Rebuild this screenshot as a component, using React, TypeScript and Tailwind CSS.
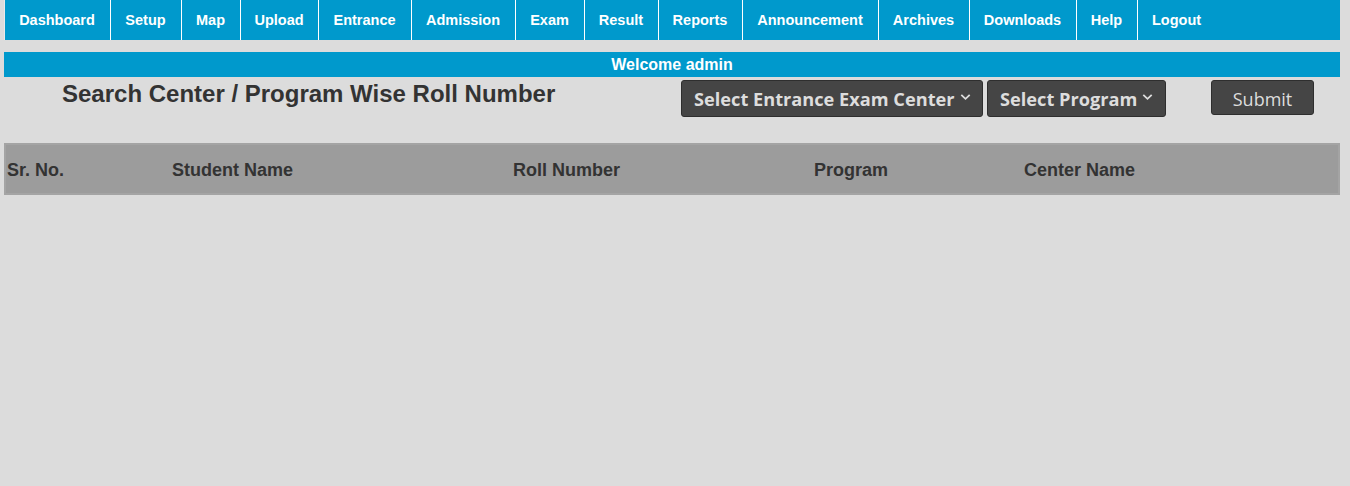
const navItems: [string, number][] = [
  ['Dashboard', 106],
  ['Setup', 71],
  ['Map', 59],
  ['Upload', 78],
  ['Entrance', 93],
  ['Admission', 104],
  ['Exam', 69],
  ['Result', 74],
  ['Reports', 84],
  ['Announcement', 136],
  ['Archives', 91],
  ['Downloads', 107],
  ['Help', 61],
  ['Logout', 0],
]

const columns = ['Sr. No.', 'Student Name', 'Roll Number', 'Program', 'Center Name']

const Chevron = () => (
  <svg width="11" height="8" viewBox="0 0 11 8" className="ml-[5px] mt-[-4px]">
    <path d="M1.3 1.8 L5.5 5.8 L9.7 1.8" fill="none" stroke="#dddddd" strokeWidth="1.8" />
  </svg>
)

const SelectBox = ({ label, className }: { label: string; className?: string }) => (
  <div
    className={
      'flex h-[37px] items-center rounded-[3px] border border-[#2e2e2e] bg-[#454545] pl-[12px] pr-[10px] text-[18.2px] font-bold text-[#dddddd] ' +
      (className ?? '')
    }
    style={{ fontFamily: '"Open Sans", sans-serif' }}
  >
    <span className="pt-[2px]">{label}</span>
    <Chevron />
  </div>
)

export default function App() {
  return (
    <div
      className="min-h-[486px] w-[1350px] bg-[#dcdcdc] text-[#333333]"
      style={{ fontFamily: '"Liberation Sans", Arial, sans-serif' }}
    >
      <ul className="ml-[4px] flex h-[40px] w-[1336px] border-l border-[#eaeaea] bg-[#0099cc]">
        {navItems.map(([item, w]) =>
          w ? (
            <li
              key={item}
              className="flex h-[40px] shrink-0 items-center justify-center border-r border-white pr-[1px] pt-[1px] text-[14.5px] font-bold text-white"
              style={{ width: w }}
            >
              {item}
            </li>
          ) : (
            <li
              key={item}
              className="flex h-[40px] items-center pl-[14px] pt-[1px] text-[14.5px] font-bold text-white"
            >
              {item}
            </li>
          )
        )}
      </ul>

      <div className="ml-[4px] mt-[12px] flex h-[25px] w-[1336px] items-center justify-center bg-[#0099cc] text-[16px] font-bold text-white">
        Welcome admin
      </div>

      <div className="flex h-[66px] items-start">
        <h2 className="ml-[62px] mt-[2px] w-[619px] text-[24px] font-bold leading-[30px] text-[#333333]">
          Search Center / Program Wise Roll Number
        </h2>
        <div className="mt-[3px] flex gap-[4px]">
          <SelectBox label="Select Entrance Exam Center" className="w-[302px]" />
          <SelectBox label="Select Program" className="w-[179px]" />
        </div>
        <button
          className="ml-[45px] mt-[3px] h-[35px] w-[103px] rounded-[3px] border border-[#2e2e2e] bg-[#454545] pt-[3px] text-[18px] text-[#dddddd]"
          style={{ fontFamily: '"Open Sans", sans-serif' }}
        >
          Submit
        </button>
      </div>

      <div className="ml-[4px] grid h-[52px] w-[1336px] grid-cols-[165px_341px_301px_210px_1fr] items-center border-2 border-[#a4a4a4] bg-[#9c9c9c] pl-[1px] pt-[2px] text-[18px] font-bold text-[#333333]">
        {columns.map(c => (
          <div key={c}>{c}</div>
        ))}
      </div>
    </div>
  )
}
